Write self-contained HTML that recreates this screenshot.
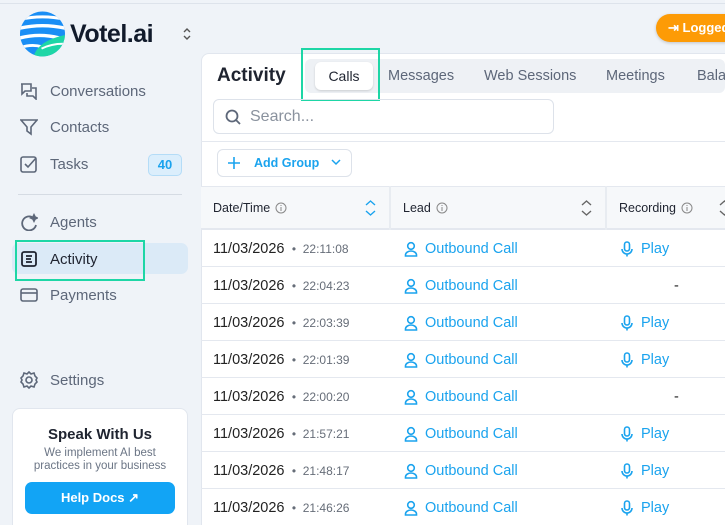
<!DOCTYPE html><html><head><meta charset="utf-8"><style>
*{box-sizing:border-box;margin:0;padding:0}
html,body{width:725px;height:525px;overflow:hidden}
body{background:#eff3f8;font-family:"Liberation Sans",sans-serif;position:relative;color:#1f2430}
.abs{position:absolute}
.nav{position:absolute;left:20px;font-size:15px;color:#5d6779;display:flex;align-items:center}
.nav svg{margin-right:12px}
.panel{position:absolute;left:201px;top:53px;width:540px;height:480px;background:#fff;border:1px solid #e1e6ee;border-radius:8px 0 0 0}
.row{position:absolute;left:201px;width:524px;height:37px;border-bottom:1px solid #e4e8ef;font-size:14.5px}
.row .d{position:absolute;left:12px;top:11px;color:#222}
.row .t{font-size:12px;color:#666d78}
.row .l{position:absolute;left:203px;top:11px;color:#1aa3ee;display:flex;align-items:center}
.row .p{position:absolute;left:419px;top:11px;color:#1aa3ee;display:flex;align-items:center}
.row svg{margin-right:7px}
.hd{position:absolute;top:201px;font-size:12.5px;color:#1f2430;display:flex;align-items:center}
.hd svg{margin-left:5px}
</style></head><body>
<div class="abs" style="left:0;top:3px;width:725px;height:1px;background:#dde3eb"></div>
<svg class="abs" style="left:20px;top:11px" width="45" height="46" viewBox="0 0 46 46"><defs><clipPath id="c"><circle cx="23" cy="23" r="23"/></clipPath></defs><g clip-path="url(#c)"><rect width="46" height="46" fill="#1a8ef5"/><path d="M0 8 Q23 3 46 8" stroke="#fff" stroke-width="3" fill="none"/><path d="M0 17 Q23 12 46 17" stroke="#fff" stroke-width="3.5" fill="none"/><path d="M0 27 Q20 22 40 27" stroke="#fff" stroke-width="3.5" fill="none"/><path d="M0 37 Q12 33 22 36" stroke="#fff" stroke-width="3" fill="none"/><path d="M14 46 Q18 30 46 24 L46 46Z" fill="#1ed6a6"/><path d="M22 38 Q32 33 44 33" stroke="#fff" stroke-width="2" fill="none"/></g></svg>
<div class="abs" style="left:70px;top:20px;font-size:25px;font-weight:bold;color:#111a2b;letter-spacing:-0.5px">Votel.ai</div>
<svg class="abs" style="left:182px;top:27px" width="10" height="14" fill="none" stroke="#555" stroke-width="1.4"><path d="M2 5l3-3 3 3M2 9l3 3 3-3"/></svg>
<div class="nav" style="top:82px"><svg width="18" height="18" fill="none" stroke="#5d6779" stroke-width="1.6"><path d="M1 2h10v7H5l-3 3V2zM7 11v3h6l3 3V6h-4"/></svg>Conversations</div>
<div class="nav" style="top:118px"><svg width="18" height="18" fill="none" stroke="#5d6779" stroke-width="1.6"><path d="M1 2h16l-6 7v7l-4-3V9z"/></svg>Contacts</div>
<div class="nav" style="top:155px"><svg width="18" height="18" fill="none" stroke="#5d6779" stroke-width="1.6"><rect x="1" y="2" width="15" height="15" rx="2"/><path d="M5 9l3 3 8-9"/></svg>Tasks</div>
<div class="abs" style="left:148px;top:154px;width:34px;height:22px;border-radius:5px;background:#dbeefc;border:1px solid #b4dcf7;color:#1aa3ee;font-size:13px;font-weight:bold;text-align:center;line-height:20px">40</div>
<div class="abs" style="left:18px;top:194px;width:164px;height:1px;background:#d5dbe3"></div>
<div class="nav" style="top:213px"><svg width="18" height="18" fill="none" stroke="#5d6779" stroke-width="1.8"><path d="M12 4a7 7 0 1 0 4 8"/><path d="M14 2l1 2 2 1-2 1-1 2-1-2-2-1 2-1z" fill="#5d6779"/></svg>Agents</div>
<div class="abs" style="left:12px;top:243px;width:176px;height:31px;background:#dbeaf7;border-radius:7px"></div>
<div class="abs" style="left:15px;top:240px;width:130px;height:41px;border:2.5px solid #1ed6a6"></div>
<div class="nav" style="top:250px;color:#1f2430"><svg width="18" height="18" fill="none" stroke="#1f2430" stroke-width="1.8"><rect x="2" y="2" width="14" height="14" rx="2"/><path d="M6 6h6M6 9h5M6 12h6"/></svg>Activity</div>
<div class="nav" style="top:286px"><svg width="18" height="18" fill="none" stroke="#5d6779" stroke-width="1.6"><rect x="1" y="3" width="16" height="12" rx="2"/><path d="M1 7h16"/></svg>Payments</div>
<div class="nav" style="top:371px"><svg width="18" height="18" fill="none" stroke="#5d6779" stroke-width="1.6"><circle cx="9" cy="9" r="3"/><path d="M9 1l2 2 3-1 1 3 2 2-1 2 1 2-2 2-1 3-3-1-2 2-2-2-3 1-1-3-2-2 1-2-1-2 2-2 1-3 3 1z"/></svg>Settings</div>
<div class="abs" style="left:12px;top:408px;width:176px;height:130px;background:#fff;border:1px solid #e1e6ee;border-radius:8px;text-align:center">
<div style="margin-top:17px;font-size:15px;font-weight:bold;color:#1f2430">Speak With Us</div>
<div style="margin-top:4px;font-size:11.5px;color:#6b7585;line-height:13px">We implement AI best<br>practices in your business</div>
<div style="margin:9px auto 0;width:150px;height:32px;border-radius:7px;background:#12a4f5;color:#fff;font-size:13px;font-weight:bold;line-height:32px">Help Docs ↗</div></div>
<div class="abs" style="left:656px;top:14px;width:90px;height:28px;border-radius:14px;background:#fd9b06;color:#fff;font-weight:bold;font-size:13px;line-height:28px;padding-left:12px;box-shadow:0 1px 3px rgba(0,0,0,.2)">⇥ Logged</div>
<div class="panel"></div>
<div class="abs" style="left:217px;top:65px;font-size:19px;font-weight:bold;color:#1f2430">Activity</div>
<div class="abs" style="left:305px;top:59px;width:420px;height:34px;background:#eef1f5;border-radius:6px"></div>
<div class="abs" style="left:315px;top:62px;width:58px;height:28px;background:#fff;border-radius:6px;box-shadow:0 1px 2px rgba(0,0,0,.15);text-align:center;line-height:28px;font-size:14px;color:#1f2430">Calls</div>
<div class="abs" style="left:301px;top:48px;width:79px;height:53px;border:2.5px solid #1ed6a6"></div>
<div class="abs" style="left:388px;top:68px;font-size:14.5px;color:#5d6779">Messages</div>
<div class="abs" style="left:484px;top:68px;font-size:14.5px;color:#5d6779">Web Sessions</div>
<div class="abs" style="left:606px;top:68px;font-size:14.5px;color:#5d6779">Meetings</div>
<div class="abs" style="left:697px;top:68px;font-size:14.5px;color:#5d6779">Bala</div>
<div class="abs" style="left:213px;top:99px;width:341px;height:35px;border:1px solid #dde2ea;border-radius:6px"></div>
<svg class="abs" style="left:225px;top:109px" width="16" height="16" fill="none" stroke="#5d6779" stroke-width="1.8"><circle cx="7" cy="7" r="5.5"/><path d="M11 11l4 4"/></svg>
<div class="abs" style="left:250px;top:108px;font-size:16px;color:#8a929e">Search...</div>
<div class="abs" style="left:201px;top:141px;width:524px;height:1px;background:#e4e8ef"></div>
<div class="abs" style="left:217px;top:149px;width:135px;height:28px;border:1px solid #dde2ea;border-radius:6px"></div>
<svg class="abs" style="left:228px;top:157px" width="12" height="12" stroke="#1aa3ee" stroke-width="1.6"><path d="M6 0v12M0 6h12"/></svg>
<div class="abs" style="left:254px;top:156px;font-size:12.5px;font-weight:bold;color:#1aa3ee">Add Group</div>
<svg class="abs" style="left:331px;top:159px" width="10" height="7" fill="none" stroke="#1aa3ee" stroke-width="1.5"><path d="M1 1l4 4 4-4"/></svg>
<div class="abs" style="left:201px;top:186px;width:524px;height:44px;background:#f6f8fa;border-top:1px solid #e4e8ef;border-bottom:2px solid #e4e8ef"></div>
<div class="abs" style="left:389px;top:186px;width:2px;height:44px;background:#e8ecf1"></div>
<div class="abs" style="left:605px;top:186px;width:2px;height:44px;background:#e8ecf1"></div>
<div class="hd" style="left:213px">Date/Time<svg width="12" height="12" fill="none" stroke="#888" stroke-width="1"><circle cx="6" cy="6" r="5"/><path d="M6 5v4M6 3v1"/></svg></div>
<svg class="abs" style="left:365px;top:200px" width="11" height="16" fill="none" stroke="#1aa3ee" stroke-width="1.4"><path d="M1 5l4.5-4 4.5 4M1 11l4.5 4 4.5-4"/></svg>
<div class="hd" style="left:403px">Lead<svg width="12" height="12" fill="none" stroke="#888" stroke-width="1"><circle cx="6" cy="6" r="5"/><path d="M6 5v4M6 3v1"/></svg></div>
<svg class="abs" style="left:581px;top:200px" width="11" height="16" fill="none" stroke="#666" stroke-width="1.4"><path d="M1 5l4.5-4 4.5 4M1 11l4.5 4 4.5-4"/></svg>
<div class="hd" style="left:619px">Recording<svg width="12" height="12" fill="none" stroke="#888" stroke-width="1"><circle cx="6" cy="6" r="5"/><path d="M6 5v4M6 3v1"/></svg></div>
<svg class="abs" style="left:719px;top:200px" width="11" height="16" fill="none" stroke="#666" stroke-width="1.4"><path d="M1 5l4.5-4 4.5 4M1 11l4.5 4 4.5-4"/></svg>

<svg width="0" height="0" style="position:absolute"><defs>
<symbol id="u" viewBox="0 0 14 16"><circle cx="7" cy="5" r="3.3" fill="none" stroke="#1aa3ee" stroke-width="1.6"/><path d="M1.5 15v-1a5.5 4 0 0 1 11 0v1z" fill="none" stroke="#1aa3ee" stroke-width="1.6"/></symbol>
<symbol id="m" viewBox="0 0 14 16"><rect x="4.5" y="1" width="5" height="9" rx="2.5" fill="none" stroke="#1aa3ee" stroke-width="1.6"/><path d="M2 8a5 5 0 0 0 10 0M7 13v2.5" fill="none" stroke="#1aa3ee" stroke-width="1.6"/></symbol>
</defs></svg>
<div class="row" style="top:230px"><span class="d">11/03/2026 <span class="t">&nbsp;•&nbsp; 22:11:08</span></span><span class="l"><svg width="14" height="16"><use href="#u"/></svg>Outbound Call</span><span class="p"><svg width="14" height="16"><use href="#m"/></svg>Play</span></div>
<div class="row" style="top:267px"><span class="d">11/03/2026 <span class="t">&nbsp;•&nbsp; 22:04:23</span></span><span class="l"><svg width="14" height="16"><use href="#u"/></svg>Outbound Call</span><span class="p" style="left:473px;color:#222">-</span></div>
<div class="row" style="top:304px"><span class="d">11/03/2026 <span class="t">&nbsp;•&nbsp; 22:03:39</span></span><span class="l"><svg width="14" height="16"><use href="#u"/></svg>Outbound Call</span><span class="p"><svg width="14" height="16"><use href="#m"/></svg>Play</span></div>
<div class="row" style="top:341px"><span class="d">11/03/2026 <span class="t">&nbsp;•&nbsp; 22:01:39</span></span><span class="l"><svg width="14" height="16"><use href="#u"/></svg>Outbound Call</span><span class="p"><svg width="14" height="16"><use href="#m"/></svg>Play</span></div>
<div class="row" style="top:378px"><span class="d">11/03/2026 <span class="t">&nbsp;•&nbsp; 22:00:20</span></span><span class="l"><svg width="14" height="16"><use href="#u"/></svg>Outbound Call</span><span class="p" style="left:473px;color:#222">-</span></div>
<div class="row" style="top:415px"><span class="d">11/03/2026 <span class="t">&nbsp;•&nbsp; 21:57:21</span></span><span class="l"><svg width="14" height="16"><use href="#u"/></svg>Outbound Call</span><span class="p"><svg width="14" height="16"><use href="#m"/></svg>Play</span></div>
<div class="row" style="top:452px"><span class="d">11/03/2026 <span class="t">&nbsp;•&nbsp; 21:48:17</span></span><span class="l"><svg width="14" height="16"><use href="#u"/></svg>Outbound Call</span><span class="p"><svg width="14" height="16"><use href="#m"/></svg>Play</span></div>
<div class="row" style="top:489px"><span class="d">11/03/2026 <span class="t">&nbsp;•&nbsp; 21:46:26</span></span><span class="l"><svg width="14" height="16"><use href="#u"/></svg>Outbound Call</span><span class="p"><svg width="14" height="16"><use href="#m"/></svg>Play</span></div>
</body></html>
